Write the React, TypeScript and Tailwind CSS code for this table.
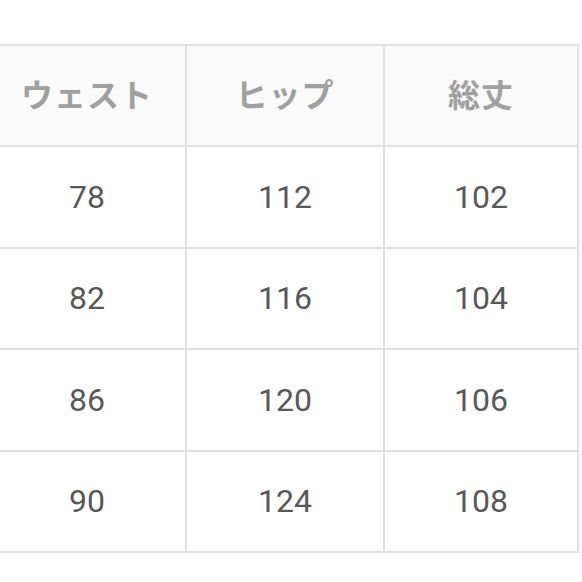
import React from "react";

const rows = [
  ["78", "112", "102"],
  ["82", "116", "104"],
  ["86", "120", "106"],
  ["90", "124", "108"],
];

export default function App() {
  return (
    <div className="w-[582px] h-[582px] bg-white overflow-hidden relative">
      <div className="pt-[44px] ml-[-13px]">
        <div
          className="grid grid-cols-[198px_198px_194px] border-t-2 border-l-2 border-[#e0e0e0] w-[592px]"
          style={{ fontFamily: "Roboto, 'Noto Sans CJK JP', sans-serif" }}
        >
          {["ウェスト", "ヒップ", "総丈"].map((h) => (
            <div
              key={h}
              className="h-[101px] flex items-center justify-center bg-[#fafafa] border-r-2 border-b-2 border-[#e0e0e0] text-[32px] font-bold text-[#a0a0a0] tracking-[1px]"
            >
              {h}
            </div>
          ))}
          {rows.map((r, i) =>
            r.map((c, j) => (
              <div
                key={i + "-" + j}
                className="h-[101.5px] flex items-center justify-center bg-white border-r-2 border-b-2 border-[#e0e0e0] text-[32px] text-[#585858]"
              >
                {c}
              </div>
            ))
          )}
        </div>
      </div>
    </div>
  );
}
